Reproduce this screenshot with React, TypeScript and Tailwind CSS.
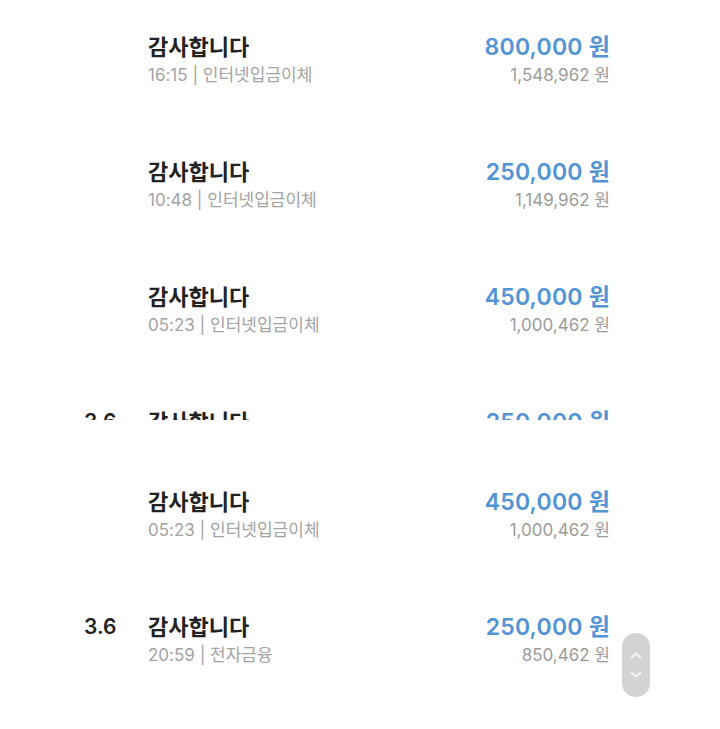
const rows1 = [
  { date: '', time: '16:15', kind: '인터넷입금이체', amount: '800,000', balance: '1,548,962' },
  { date: '', time: '10:48', kind: '인터넷입금이체', amount: '250,000', balance: '1,149,962' },
  { date: '', time: '05:23', kind: '인터넷입금이체', amount: '450,000', balance: '1,000,462' },
  { date: '3.6', time: '20:59', kind: '전자금융', amount: '250,000', balance: '850,462' },
];

const rows2 = [
  { date: '', time: '05:23', kind: '인터넷입금이체', amount: '450,000', balance: '1,000,462' },
  { date: '3.6', time: '20:59', kind: '전자금융', amount: '250,000', balance: '850,462' },
];

type Row = (typeof rows1)[number];

function TxRow({ row, last }: { row: Row; last?: boolean }) {
  return (
    <div className={`flex items-start ${last ? '' : 'h-[125px]'}`}>
      <div className="w-[64px] shrink-0 text-[21px] leading-[26px] font-semibold text-[#222]">{row.date}</div>
      <div className="flex-1">
        <div className="text-[22px] leading-[26px] font-semibold text-[#222]">감사합니다</div>
        <div className="mt-[5px] text-[17px] leading-[21px] text-[#a3a3a3]">
          {row.time} | {row.kind}
        </div>
      </div>
      <div className="flex flex-col items-end">
        <div className="text-[23px] leading-[26px] font-semibold tracking-[0.2px] text-[#5294d4]">{row.amount} 원</div>
        <div className="mt-[5px] text-[17px] leading-[21px] text-[#9b9b9b]">{row.balance} 원</div>
      </div>
    </div>
  );
}

export default function App() {
  return (
    <div
      className="w-[720px] h-[729px] bg-white overflow-hidden"
      style={{ fontFamily: 'Inter, "Noto Sans CJK KR", sans-serif' }}
    >
      <div className="h-[420px] overflow-hidden pt-[34px] pl-[84px] pr-[110px]">
        {rows1.map((r, i) => (
          <TxRow key={i} row={r} />
        ))}
      </div>
      <div className="relative pt-[69px] pl-[84px] pr-[110px]">
        <TxRow row={rows2[0]} />
        <TxRow row={rows2[1]} last />
        <div className="absolute right-[70px] top-[213px] w-[28px] h-[64px] rounded-full bg-[#d3d3d3] flex flex-col items-center justify-center gap-[10px]">
          <svg width="14" height="9" viewBox="0 0 14 9" fill="none" stroke="#f4f4f4" strokeWidth="1.8" strokeLinecap="round" strokeLinejoin="round">
            <path d="M2.5 6.5 L7 2.5 L11.5 6.5" />
          </svg>
          <svg width="14" height="9" viewBox="0 0 14 9" fill="none" stroke="#f4f4f4" strokeWidth="1.8" strokeLinecap="round" strokeLinejoin="round">
            <path d="M2.5 2.5 L7 6.5 L11.5 2.5" />
          </svg>
        </div>
      </div>
    </div>
  );
}
